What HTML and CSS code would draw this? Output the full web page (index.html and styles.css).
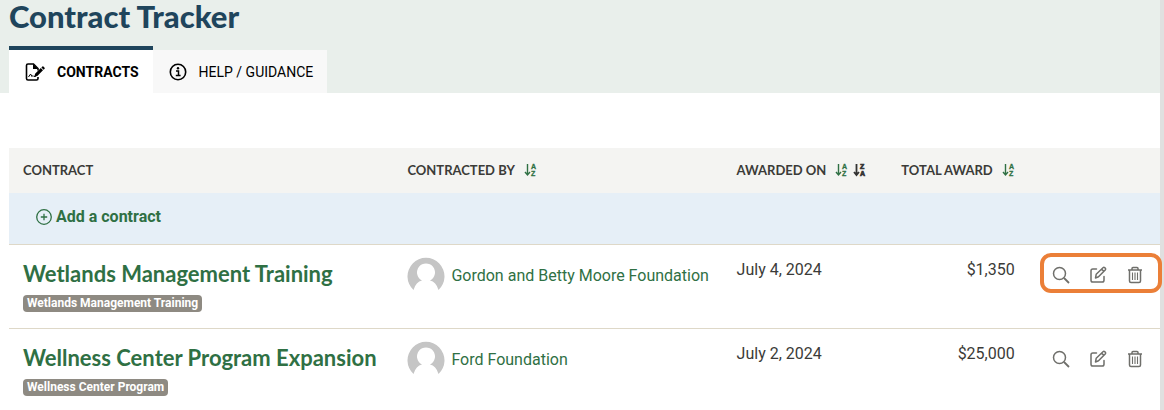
FILE: index.html
```html
<!DOCTYPE html>
<html lang="en">
<head>
<meta charset="utf-8">
<meta name="viewport" content="width=device-width, initial-scale=1">
<title>Contract Tracker</title>
<link rel="stylesheet" href="styles.css">
</head>
<body>
<svg class="sprite" aria-hidden="true">
  <symbol id="search" viewBox="0 0 18 18"><circle cx="7.5" cy="7.5" r="6" fill="none" stroke="currentColor" stroke-width="1.5"/><path d="M12 12l5 5" stroke="currentColor" stroke-width="1.8"/></symbol>
  <symbol id="edit" viewBox="0 0 18 18"><g fill="none" stroke="currentColor" stroke-width="1.5" stroke-linecap="round" stroke-linejoin="round"><path d="M7.5 3H3.800Q2 3 2 4.800v9.400Q2 16 3.800 16h9.400q1.800 0 1.800-1.800V10.500"/><path d="M6.500 12l.7-3.700L14 1.700q.9-.8 1.800 0l.4.4q.8.900 0 1.800l-6.700 6.900L6.500 12zM12.600 3.100l2.200 2.200"/></g></symbol>
  <symbol id="trash" viewBox="0 0 18 18"><g fill="none" stroke="currentColor" stroke-width="1.5"><path d="M2 4h14M3.500 4v11q0 1.500 1.500 1.500h8q1.500 0 1.500-1.500V4M6 4V2.500Q6 1.500 7 1.500h4q1 0 1 1V4"/><path d="M6.500 6.500v7.500M9 6.500v7.500M11.500 6.500v7.500" stroke-width="1.1"/></g></symbol>
  <symbol id="avatar" viewBox="0 0 38 38"><path d="M6.500 33A18.500 18.500 0 1 1 31.500 33Q29 24.500 23 23.500A9 9 0 1 0 15 23.500Q9 24.500 6.500 33z" fill="#c5c5c5"/></symbol>
</svg>
<div class="page">
  <header class="masthead">
    <h1 class="title">Contract Tracker</h1>
    <nav class="tabs">
      <a class="tab active" href="#contracts" aria-current="page">
        <svg class="tab-icon wide" viewBox="0 0 20 18" aria-hidden="true"><path d="M13 14v1.500q0 1.500-1.500 1.500H3q-1.500 0-1.500-1.500v-13Q1.500 1 3 1h5.500L13 5.500v2" fill="none" stroke="currentColor" stroke-width="1.600"/><path d="M8 1v5h5zM9.300 13.800l.8-3 5.700-5.700 2.200 2.200-5.700 5.700zM16.400 4.500l1-1q.5-.4 1 0l1.200 1.200q.4.500 0 1l-1 1z" fill="currentColor"/><path d="M3.500 14q2-4 2.700-2.300.1 2.500 1.300 1.300.8-.6 1.300.4h2" fill="none" stroke="currentColor" stroke-width="1"/></svg>
        Contracts
      </a>
      <a class="tab" href="#help">
        <svg class="tab-icon" viewBox="0 0 18 18" aria-hidden="true"><circle cx="9" cy="9" r="7.700" fill="none" stroke="currentColor" stroke-width="1.600"/><path d="M7 8h2.500v4.500M6.800 12.500h4.800" fill="none" stroke="currentColor" stroke-width="1.500"/><circle cx="9" cy="5.300" r="1.200" fill="currentColor"/></svg>
        Help / Guidance
      </a>
    </nav>
  </header>
  <main class="content">
    <table class="contracts">
      <colgroup><col class="col-contract"><col class="col-by"><col class="col-date"><col class="col-award"><col class="col-actions"></colgroup>
      <thead>
        <tr>
          <th scope="col">CONTRACT</th>
          <th scope="col"><span class="heading">CONTRACTED BY <button class="sort" aria-label="Sort contracted by ascending"><svg viewBox="0 0 13 14" aria-hidden="true"><path d="M3.500 1v11M1 9l2.500 3L6 9"/><text x="7" y="6">A</text><text x="7" y="13">Z</text></svg></button></span></th>
          <th scope="col"><span class="heading">AWARDED ON <span class="sorts"><button class="sort" aria-label="Sort awarded on ascending"><svg viewBox="0 0 13 14" aria-hidden="true"><path d="M3.500 1v11M1 9l2.500 3L6 9"/><text x="7" y="6">A</text><text x="7" y="13">Z</text></svg></button><button class="sort current" aria-label="Sort awarded on descending"><svg viewBox="0 0 13 14" aria-hidden="true"><path d="M3.500 1v11M1 9l2.500 3L6 9"/><text x="7" y="6">Z</text><text x="7" y="13">A</text></svg></button></span></span></th>
          <th scope="col" class="amount"><span class="heading end">TOTAL AWARD <button class="sort" aria-label="Sort total award ascending"><svg viewBox="0 0 13 14" aria-hidden="true"><path d="M3.500 1v11M1 9l2.500 3L6 9"/><text x="7" y="6">A</text><text x="7" y="13">Z</text></svg></button></span></th>
          <td></td>
        </tr>
      </thead>
      <tbody>
        <tr class="add-row">
          <td colspan="5"><a class="add" href="#add"><svg viewBox="0 0 16 16" aria-hidden="true"><circle cx="8" cy="8" r="7.300"/><path d="M8 4.800v6.400M4.800 8h6.400"/></svg>Add a contract</a></td>
        </tr>
        <tr class="entry">
          <td><a class="name" href="#wetlands">Wetlands Management Training</a><span class="tag">Wetlands Management Training</span></td>
          <td><a class="funder" href="#moore"><svg><use href="#avatar"/></svg>Gordon and Betty Moore Foundation</a></td>
          <td>July 4, 2024</td>
          <td class="amount">$1,350</td>
          <td class="actions-cell"><div class="actions highlighted"><button aria-label="View"><svg><use href="#search"/></svg></button><button aria-label="Edit"><svg><use href="#edit"/></svg></button><button aria-label="Delete"><svg><use href="#trash"/></svg></button></div></td>
        </tr>
        <tr class="entry">
          <td><a class="name" href="#wellness">Wellness Center Program Expansion</a><span class="tag">Wellness Center Program</span></td>
          <td><a class="funder" href="#ford"><svg><use href="#avatar"/></svg>Ford Foundation</a></td>
          <td>July 2, 2024</td>
          <td class="amount">$25,000</td>
          <td class="actions-cell"><div class="actions"><button aria-label="View"><svg><use href="#search"/></svg></button><button aria-label="Edit"><svg><use href="#edit"/></svg></button><button aria-label="Delete"><svg><use href="#trash"/></svg></button></div></td>
        </tr>
      </tbody>
    </table>
  </main>
</div>
</body>
</html>
```
FILE: styles.css
```css
* { box-sizing: border-box; }
body { margin: 0; background: #fff; color: #3b3b38; font: 16px/24px Roboto, sans-serif; }
a { color: #2f7044; text-decoration: none; }
button { border: 0; padding: 0; background: none; color: inherit; cursor: pointer; }
svg { display: block; flex: none; }
.sprite { position: absolute; width: 0; height: 0; }
.page { min-height: 100vh; border-right: 4px solid #e0e0e0; }
.masthead { background: #e9efeb; padding: 0 9px; }
.title { margin: 0; color: #1f455c; font: 900 31px/32px Lato, sans-serif; padding-bottom: 14px; }
.tabs { display: flex; align-items: flex-end; }
.tab { display: flex; align-items: center; gap: 12px; height: 43px; padding: 0 14px 0 16px; background: #f8f8f8; color: #000; font-size: 14px; text-transform: uppercase; }
.tab.active { height: 47px; border-top: 4px solid #1f455c; background: #fff; font-weight: 700; }
.tab-icon { width: 18px; height: 18px; }
.tab-icon.wide { width: 20px; }
.content { padding: 55px 0 0 9px; }
.contracts { width: 100%; table-layout: fixed; border-collapse: collapse; }
.col-contract { width: 33.4%; }
.col-by { width: 28.6%; }
.col-date { width: 14%; }
.col-award { width: 12.6%; }
.contracts th, .contracts td { padding: 0 14px; text-align: left; }
.contracts thead tr { height: 45px; background: #f4f4f2; }
.contracts thead th { padding-bottom: 2px; font: 700 13px/20px Lato, sans-serif; white-space: nowrap; }
.heading { display: flex; align-items: center; gap: 9px; }
.heading.end { justify-content: flex-end; }
.sorts { display: flex; gap: 5px; }
.sort { color: #2f7044; }
.sort.current { color: #333; }
.sort svg { width: 13px; height: 14px; }
.sort path { fill: none; stroke: currentColor; stroke-width: 1.4; }
.sort text { fill: currentColor; stroke: currentColor; stroke-width: .3; font: 700 7px "Liberation Sans", sans-serif; }
.sort.current path { stroke-width: 1.8; }
.sort.current text { stroke-width: .7; }
.add-row { height: 51px; background: #e6eff7; border-bottom: 1px solid #ded8c8; }
.contracts .add-row td { padding-left: 27px; }
.add { display: inline-flex; align-items: center; gap: 4px; font-weight: 700; }
.add svg { width: 16px; height: 16px; fill: none; stroke: currentColor; stroke-width: 1.3; }
.entry { height: 84px; vertical-align: top; border-bottom: 1px solid #ded8c8; }
.entry:last-child { height: 81px; border-bottom: 0; }
.contracts .entry td { padding-top: 13px; }
.contracts .amount { text-align: right; }
.name { display: block; padding-top: 2px; font: 700 22px/28px Lato, sans-serif; white-space: nowrap; }
.tag { display: block; width: fit-content; margin-top: 7px; padding: 0 4px; border-radius: 4px; background: #8e8a82; color: #fff; font: 700 12px/17px Roboto, sans-serif; white-space: nowrap; }
.funder { display: flex; align-items: center; gap: 6px; height: 36px; white-space: nowrap; }
.funder svg { width: 38px; height: 38px; }
.contracts .entry .actions-cell { padding: 8px 0 0 12px; }
.actions { position: relative; display: flex; justify-content: space-between; padding: 13px 16px 9px 11px; color: #6f6f6b; }
.actions svg { width: 18px; height: 18px; }
.highlighted::after { content: ""; position: absolute; inset: 0 -2px 0 -1px; border: 4px solid #eb7f38; border-radius: 11px; pointer-events: none; }
```
